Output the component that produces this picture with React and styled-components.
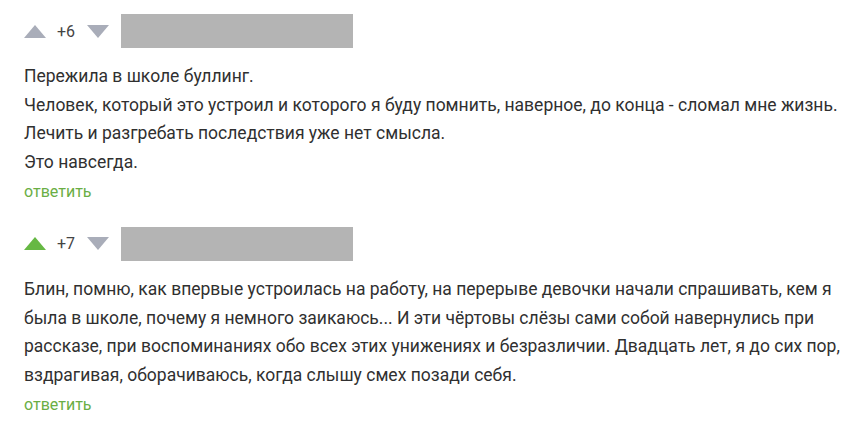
import styled, { createGlobalStyle } from "styled-components"

const comments = [
    {
        rating: "+6",
        voted: false,
        lines: [
            "Пережила в школе буллинг.",
            "Человек, который это устроил и которого я буду помнить, наверное, до конца - сломал мне жизнь.",
            "Лечить и разгребать последствия уже нет смысла.",
            "Это навсегда.",
        ],
    },
    {
        rating: "+7",
        voted: true,
        lines: [
            "Блин, помню, как впервые устроилась на работу, на перерыве девочки начали спрашивать, кем я была в школе, почему я немного заикаюсь... И эти чёртовы слёзы сами собой навернулись при рассказе, при воспоминаниях обо всех этих унижениях и безразличии. Двадцать лет, я до сих пор, вздрагивая, оборачиваюсь, когда слышу смех позади себя.",
        ],
    },
]

export default function App(){

    return(
        <>
            <Global/>
            <Page>
                {comments.map((c, i) => (
                    <Comment key={i}>
                        <Header>
                            <Arrow $up $active={c.voted}/>
                            <Rating>{c.rating}</Rating>
                            <Arrow/>
                            <Hidden/>
                        </Header>
                        <Body>
                            {c.lines.map((l, j) => <p key={j}>{l}</p>)}
                        </Body>
                        <Reply>ответить</Reply>
                    </Comment>
                ))}
            </Page>
        </>
    )
}

const Global = createGlobalStyle`
    body {
        margin: 0;
        background: #ffffff;
        font-family: Roboto, "Noto Sans", sans-serif;
    }
`

const Page = styled.div`
    display: flex;
    flex-direction: column;
    gap: 20px;
    padding: 14px 16px 0 24px;
`

const Comment = styled.div`
    display: flex;
    flex-direction: column;
`

const Header = styled.div`
    display: flex;
    align-items: center;
    height: 34px;
`

const Arrow = styled.span`
    width: 0;
    height: 0;
    border-left: 11.5px solid transparent;
    border-right: 11.5px solid transparent;
    ${p => p.$up
        ? `border-bottom: 13px solid ${p.$active ? "#66b844" : "#a9adb9"};`
        : `border-top: 13px solid #a9adb9;`}
    margin-right: 11px;
`

const Rating = styled.span`
    font-size: 16px;
    color: #444444;
    margin-right: 12px;
    min-width: 17px;
`

const Hidden = styled.div`
    width: 232px;
    height: 34px;
    background: #b4b4b4;
    margin-left: 1px;
`

const Body = styled.div`
    margin-top: 14px;
    font-size: 17.5px;
    line-height: 28.7px;
    color: #303030;

    p {
        margin: 0;
    }
`

const Reply = styled.span`
    font-size: 16px;
    line-height: 30px;
    color: #6aae45;
    cursor: pointer;
`
